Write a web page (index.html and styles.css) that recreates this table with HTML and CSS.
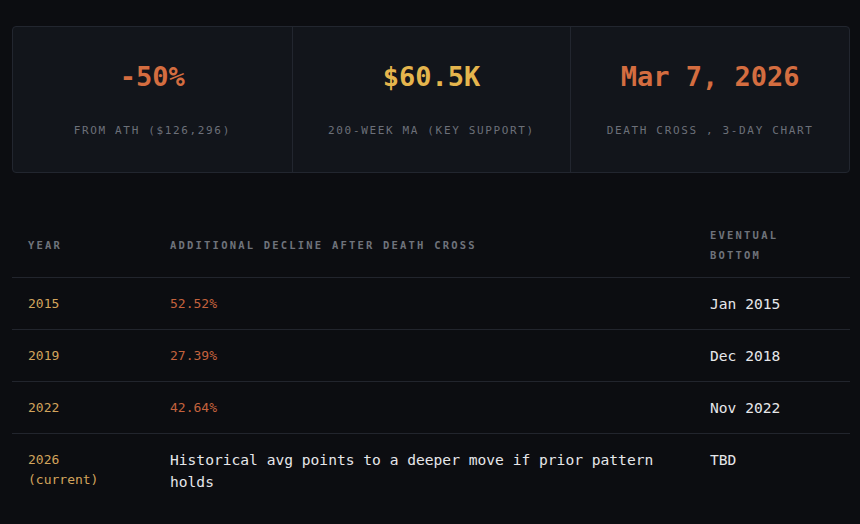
FILE: index.html
```html
<!DOCTYPE html>
<html>
<head>
<meta charset="utf-8">
<link rel="stylesheet" href="styles.css">
</head>
<body>
<div class="page">
  <section class="stats">
    <div class="stat">
      <div class="value orange">-50%</div>
      <div class="label">FROM ATH ($126,296)</div>
    </div>
    <div class="stat">
      <div class="value gold">$60.5K</div>
      <div class="label">200-WEEK MA (KEY SUPPORT)</div>
    </div>
    <div class="stat">
      <div class="value orange">Mar 7, 2026</div>
      <div class="label">DEATH CROSS , 3-DAY CHART</div>
    </div>
  </section>

  <table class="history">
    <colgroup>
      <col class="w-year">
      <col class="w-decl">
      <col class="w-bot">
    </colgroup>
    <thead>
      <tr>
        <th>YEAR</th>
        <th>ADDITIONAL DECLINE AFTER DEATH CROSS</th>
        <th class="c-bot">EVENTUAL<br>BOTTOM</th>
      </tr>
    </thead>
    <tbody>
      <tr>
        <td class="year">2015</td>
        <td class="pct">52.52%</td>
        <td class="bot">Jan 2015</td>
      </tr>
      <tr>
        <td class="year">2019</td>
        <td class="pct">27.39%</td>
        <td class="bot">Dec 2018</td>
      </tr>
      <tr>
        <td class="year">2022</td>
        <td class="pct">42.64%</td>
        <td class="bot">Nov 2022</td>
      </tr>
      <tr class="last">
        <td class="year">2026<br>(current)</td>
        <td class="note">Historical avg points to a deeper move if prior pattern holds</td>
        <td class="bot">TBD</td>
      </tr>
    </tbody>
  </table>
</div>
</body>
</html>
```

FILE: styles.css
```css
html, body {
  margin: 0;
  padding: 0;
  background: #0c0d11;
}

body {
  font-family: "DejaVu Sans Mono", "Liberation Mono", monospace;
  color: #e4e5e8;
}

.page {
  padding: 26px 10px 0 12px;
}

.stats {
  display: grid;
  grid-template-columns: 1fr 1fr 1fr;
  background: #12151b;
  border: 1px solid #22262f;
  border-radius: 4px;
  height: 145px;
}

.stat {
  display: flex;
  flex-direction: column;
  align-items: center;
  padding-top: 34px;
}

.stat + .stat {
  border-left: 1px solid #22262f;
}

.value {
  font-size: 27px;
  font-weight: bold;
  line-height: 32px;
}

.orange { color: #d46d40; }
.gold { color: #e5b54d; }

.label {
  margin-top: 31px;
  font-size: 11px;
  line-height: 14px;
  letter-spacing: 1.65px;
  color: #6c7079;
}

.history {
  width: 838px;
  margin-top: 36px;
  border-collapse: collapse;
  table-layout: fixed;
}

.w-year { width: 142px; }
.w-decl { width: 556px; }
.w-bot { width: 140px; }

.history th {
  text-align: left;
  font-weight: bold;
  font-size: 10.5px;
  letter-spacing: 2.2px;
  line-height: 20px;
  color: #6f737b;
  padding: 16px 16px 12px;
  vertical-align: middle;
  border-bottom: 1px solid #22252d;
}

.history th.c-bot { padding-left: 0; padding-right: 0; }

.history td {
  padding: 16px 16px 15px;
  line-height: 20px;
  border-bottom: 1px solid #22252d;
  vertical-align: top;
}

.history td.bot { padding-left: 0; padding-right: 0; }

.history tr.last td {
  border-bottom: none;
}

.year {
  font-size: 13px;
  color: #d3a45c;
}

.pct {
  font-size: 13px;
  color: #c4623d;
}

.bot {
  font-size: 14.6px;
  color: #e6e7ea;
}

.history td.note {
  font-size: 14.6px;
  line-height: 22px;
  padding-top: 15px;
  color: #e6e7ea;
}
```
